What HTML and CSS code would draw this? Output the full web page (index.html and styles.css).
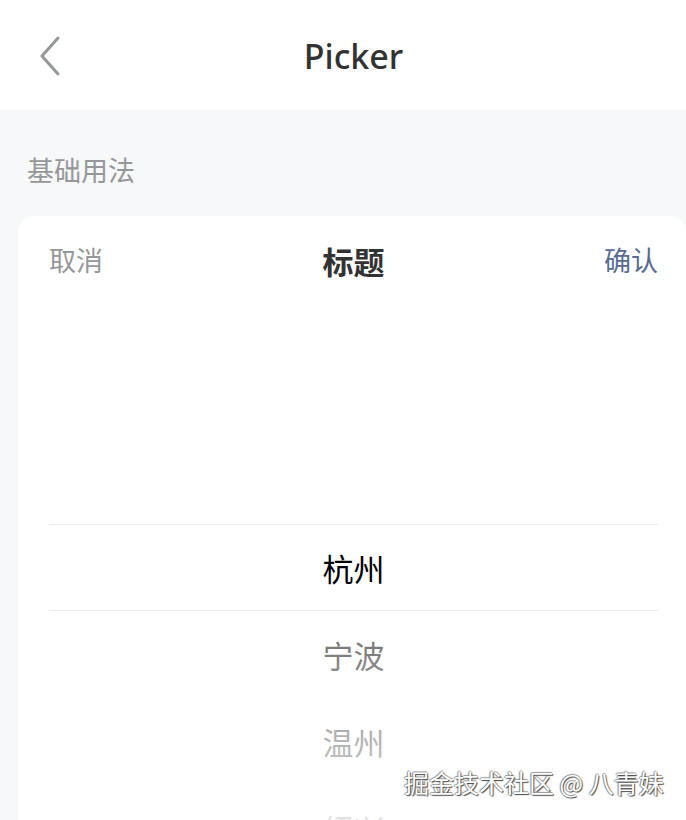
FILE: index.html
```html
<!DOCTYPE html>
<html lang="zh-CN">
<head>
    <meta charset="UTF-8">
    <meta name="viewport" content="width=device-width, initial-scale=1.0">
    <title>Picker</title>
    <link rel="stylesheet" href="styles.css">
</head>
<body>
    <div class="nav-bar">
        <div class="nav-left">
            <svg class="nav-back" width="24" height="40" viewBox="0 0 24 40">
                <path d="M19 2 L3 20 L19 38" fill="none" stroke="#969799" stroke-width="3" stroke-linejoin="round" stroke-linecap="round"/>
            </svg>
        </div>
        <div class="nav-title">Picker</div>
        <div class="nav-right"></div>
    </div>

    <div class="demo-title">基础用法</div>

    <div class="picker">
        <div class="picker-toolbar">
            <button class="picker-cancel">取消</button>
            <div class="picker-title">标题</div>
            <button class="picker-confirm">确认</button>
        </div>
        <div class="picker-columns">
            <ul class="picker-column">
                <li class="picker-item selected">杭州</li>
                <li class="picker-item">宁波</li>
                <li class="picker-item">温州</li>
                <li class="picker-item">绍兴</li>
                <li class="picker-item">湖州</li>
            </ul>
            <div class="picker-mask"></div>
        </div>
    </div>

    <div class="watermark">掘金技术社区 @ 八青妹</div>
</body>
</html>
```

FILE: styles.css
```css
body {
    margin: 0;
    width: 686px;
    height: 820px;
    overflow: hidden;
    background: #f7f8fa;
    font-family: "Noto Sans", "Noto Sans CJK SC", sans-serif;
    position: relative;
}

.nav-bar {
    height: 110px;
    background: #fff;
    display: grid;
    grid-template-columns: 1fr auto 1fr;
    align-items: center;
}

.nav-left {
    padding-left: 39px;
    display: flex;
    align-items: center;
    margin-top: 2px;
}

.nav-title {
    font-size: 34px;
    font-weight: 500;
    color: #323233;
    margin-left: 21px;
    margin-top: 2px;
}

.demo-title {
    padding: 40px 27px 0;
    font-family: "Noto Sans CJK SC", sans-serif;
    font-size: 27px;
    line-height: 40px;
    color: #969799;
    margin-bottom: 26px;
}

.picker {
    margin-left: 18px;
    background: #fff;
    border-radius: 16px 16px 0 0;
    font-family: "Noto Sans CJK SC", sans-serif;
}

.picker-toolbar {
    height: 88px;
    padding: 0 28px 0 31px;
    display: flex;
    align-items: center;
    justify-content: space-between;
}

.picker-toolbar button {
    border: none;
    background: none;
    padding: 0;
    font-family: inherit;
    font-size: 27px;
    line-height: 40px;
}

.picker-cancel {
    color: #969799;
}

.picker-confirm {
    color: #576b95;
}

.picker-title {
    font-size: 31px;
    font-weight: 700;
    color: #323233;
}

.picker-columns {
    position: relative;
    height: 522px;
    padding: 0 28px 0 31px;
    overflow: hidden;
}

.picker-column {
    list-style: none;
    margin: 0;
    padding: 220px 0 0;
}

.picker-item {
    height: 87px;
    display: flex;
    align-items: center;
    justify-content: center;
    font-size: 31px;
    color: #000;
    box-sizing: border-box;
}

.picker-item.selected {
    border-top: 1px solid #ebedf0;
    border-bottom: 1px solid #ebedf0;
}

.picker-mask {
    position: absolute;
    left: 0;
    right: 0;
    top: 0;
    bottom: 0;
    background-image:
        linear-gradient(180deg, rgba(255, 255, 255, 0.9), rgba(255, 255, 255, 0.4)),
        linear-gradient(0deg, rgba(255, 255, 255, 0.9), rgba(255, 255, 255, 0.4));
    background-repeat: no-repeat;
    background-position: top, bottom;
    background-size: 100% 220px, 100% 215px;
    pointer-events: none;
}

.watermark {
    position: absolute;
    left: 404px;
    top: 766px;
    font-family: "Noto Sans CJK SC", sans-serif;
    font-size: 25px;
    line-height: 32px;
    color: #fff;
    text-shadow: 1px 1px 1px #444, -1px 0 1px #888, 0 -1px 1px #999;
    white-space: nowrap;
}
```
